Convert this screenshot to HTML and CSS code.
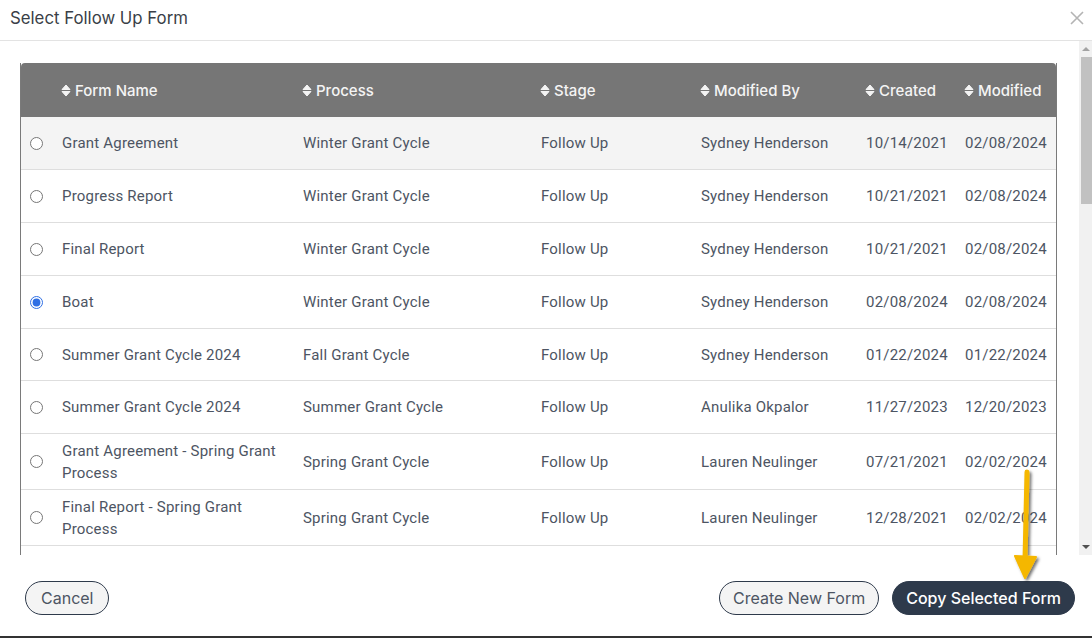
FILE: index.html
```html
<!DOCTYPE html>
<html lang="en">
<head>
    <meta charset="UTF-8">
    <meta name="viewport" content="width=device-width, initial-scale=1.0">
    <title>Select Follow Up Form</title>
    <link rel="stylesheet" href="styles.css">
</head>
<body>
    <div id="modal">
        <div id="modal-header">
            <h1>Select Follow Up Form</h1>
            <button id="close-button" aria-label="Close">
                <svg width="14" height="14" viewBox="0 0 14 14"><path d="M1 1L13 13M13 1L1 13" stroke="#b4b4b4" stroke-width="1.6" fill="none"/></svg>
            </button>
        </div>

        <div id="modal-body">
            <div id="table-wrap">
                <table id="forms-table">
                    <colgroup>
                        <col style="width:31px">
                        <col style="width:241px">
                        <col style="width:238px">
                        <col style="width:160px">
                        <col style="width:165px">
                        <col style="width:99px">
                        <col>
                    </colgroup>
                    <thead>
                        <tr>
                            <th></th>
                            <th><span class="sort"></span>Form Name</th>
                            <th><span class="sort"></span>Process</th>
                            <th><span class="sort"></span>Stage</th>
                            <th><span class="sort"></span>Modified By</th>
                            <th><span class="sort"></span>Created</th>
                            <th><span class="sort"></span>Modified</th>
                        </tr>
                    </thead>
                    <tbody>
                        <tr class="hover">
                            <td><input type="radio" name="form"></td>
                            <td>Grant Agreement</td><td>Winter Grant Cycle</td><td>Follow Up</td><td>Sydney Henderson</td><td>10/14/2021</td><td>02/08/2024</td>
                        </tr>
                        <tr>
                            <td><input type="radio" name="form"></td>
                            <td>Progress Report</td><td>Winter Grant Cycle</td><td>Follow Up</td><td>Sydney Henderson</td><td>10/21/2021</td><td>02/08/2024</td>
                        </tr>
                        <tr>
                            <td><input type="radio" name="form"></td>
                            <td>Final Report</td><td>Winter Grant Cycle</td><td>Follow Up</td><td>Sydney Henderson</td><td>10/21/2021</td><td>02/08/2024</td>
                        </tr>
                        <tr>
                            <td><input type="radio" name="form" checked></td>
                            <td>Boat</td><td>Winter Grant Cycle</td><td>Follow Up</td><td>Sydney Henderson</td><td>02/08/2024</td><td>02/08/2024</td>
                        </tr>
                        <tr class="short">
                            <td><input type="radio" name="form"></td>
                            <td>Summer Grant Cycle 2024</td><td>Fall Grant Cycle</td><td>Follow Up</td><td>Sydney Henderson</td><td>01/22/2024</td><td>01/22/2024</td>
                        </tr>
                        <tr>
                            <td><input type="radio" name="form"></td>
                            <td>Summer Grant Cycle 2024</td><td>Summer Grant Cycle</td><td>Follow Up</td><td>Anulika Okpalor</td><td>11/27/2023</td><td>12/20/2023</td>
                        </tr>
                        <tr class="wrapped">
                            <td><input type="radio" name="form"></td>
                            <td>Grant Agreement - Spring Grant Process</td><td>Spring Grant Cycle</td><td>Follow Up</td><td>Lauren Neulinger</td><td>07/21/2021</td><td>02/02/2024</td>
                        </tr>
                        <tr class="wrapped">
                            <td><input type="radio" name="form"></td>
                            <td>Final Report - Spring Grant Process</td><td>Spring Grant Cycle</td><td>Follow Up</td><td>Lauren Neulinger</td><td>12/28/2021</td><td>02/02/2024</td>
                        </tr>
                        <tr>
                            <td></td><td></td><td></td><td></td><td></td><td></td><td></td>
                        </tr>
                    </tbody>
                </table>
            </div>

            <div class="scrollbar">
                <span class="scroll-arrow up"></span>
                <div class="scroll-track">
                    <div class="scroll-thumb"></div>
                </div>
                <span class="scroll-arrow down"></span>
            </div>
        </div>

        <div id="modal-footer">
            <button class="btn btn-outline btn-cancel">Cancel</button>
            <div class="spacer"></div>
            <button class="btn btn-outline">Create New Form</button>
            <button class="btn btn-dark">Copy Selected Form</button>
        </div>

        <!-- callout arrow pointing at the copy button -->
        <svg id="callout-arrow" width="40" height="120" viewBox="0 0 40 120">
            <defs>
                <filter id="arrow-shadow" x="-50%" y="-20%" width="200%" height="140%">
                    <feDropShadow dx="2" dy="2" stdDeviation="1.5" flood-color="#000" flood-opacity="0.55"/>
                </filter>
            </defs>
            <g filter="url(#arrow-shadow)">
                <path d="M19 4 L17 92" stroke="#f5b700" stroke-width="5" stroke-linecap="round" fill="none"/>
                <path d="M7 88 L28 89 L17 110 Z" fill="#f5b700" stroke="#f5b700" stroke-width="2" stroke-linejoin="round"/>
            </g>
        </svg>
    </div>
</body>
</html>
```

FILE: styles.css
```css
* {
    box-sizing: border-box;
}

body {
    margin: 0;
    background-color: #fff;
    font-family: Roboto, "Liberation Sans", sans-serif;
}

#modal {
    position: relative;
    width: 1092px;
    height: 638px;
    display: flex;
    flex-direction: column;
    border-bottom: 2px solid #333;
}

#modal-header {
    height: 41px;
    display: flex;
    align-items: center;
    justify-content: space-between;
    padding: 0 8px 4px 10px;
    border-bottom: 1px solid #e3e3e3;
}

#modal-header h1 {
    margin: 0;
    font-family: Inter, "Open Sans", sans-serif;
    font-size: 16.8px;
    font-weight: 400;
    color: #3a3f47;
}

#close-button {
    border: none;
    background: none;
    padding: 0;
    cursor: pointer;
    display: flex;
}

#modal-body {
    height: 514px;
    display: flex;
}

#table-wrap {
    flex: 1;
    overflow: hidden;
    padding: 22px 0 0 20px;
}

.scrollbar {
    width: 13px;
    display: flex;
    flex-direction: column;
    background-color: #f1f1f1;
}

.scroll-arrow {
    height: 16px;
    display: flex;
    align-items: center;
    justify-content: center;
}

.scroll-arrow::before {
    content: "";
    border-left: 4px solid transparent;
    border-right: 4px solid transparent;
}

.scroll-arrow.up::before {
    border-bottom: 4px solid #a3a3a3;
}

.scroll-arrow.down::before {
    border-top: 4px solid #505050;
}

.scroll-track {
    flex: 1;
    padding-left: 2px;
}

.scroll-thumb {
    height: 147px;
    background-color: #c1c1c1;
}

#forms-table {
    width: 1037px;
    table-layout: fixed;
    border-collapse: separate;
    border-spacing: 0;
    border-left: 1px solid #7a7a7a;
    border-right: 1px solid #7a7a7a;
}

#forms-table th {
    height: 54px;
    background-color: #767676;
    color: #f4f4f4;
    font-family: Inter, "Open Sans", sans-serif;
    font-size: 15px;
    font-weight: 500;
    text-align: left;
    padding: 0 4px 0 9px;
    white-space: nowrap;
}

#forms-table th:first-child {
    border-top-left-radius: 4px;
}

#forms-table th:last-child {
    border-top-right-radius: 4px;
}

.sort {
    display: inline-block;
    width: 10px;
    height: 13px;
    margin-right: 4px;
    vertical-align: -1px;
    background: url("data:image/svg+xml;utf8,<svg xmlns='http://www.w3.org/2000/svg' width='10' height='13'><path d='M1 5.5L5 1L9 5.5Z M1 7.5L9 7.5L5 12Z' fill='%23f4f4f4' stroke='%23f4f4f4' stroke-width='1' stroke-linejoin='round'/></svg>") no-repeat center;
}

#forms-table td {
    height: 53px;
    padding: 6px 8px 6px 10px;
    border-bottom: 1px solid #dedede;
    font-size: 15px;
    letter-spacing: 0.2px;
    line-height: 22px;
    color: #4d5563;
    vertical-align: middle;
}

#forms-table td:first-child {
    padding: 0 0 0 9px;
}

#forms-table tr.short td {
    height: 52px;
}

#forms-table tr.wrapped td {
    padding-bottom: 5px;
}

#forms-table tr.wrapped td:first-child {
    padding-bottom: 0;
}

#forms-table tr.hover td {
    background-color: #f4f4f4;
}

input[type="radio"] {
    display: block;
    width: 13px;
    height: 13px;
    margin: 0;
    accent-color: #2f6fe4;
}

#modal-footer {
    flex: 1;
    display: flex;
    align-items: flex-start;
    gap: 13px;
    padding: 26px 17px 0 25px;
}

.spacer {
    flex: 1;
}

.btn {
    height: 34px;
    padding: 0 13px;
    border-radius: 17px;
    font-family: Inter, "Open Sans", sans-serif;
    font-size: 16px;
    cursor: pointer;
}

.btn-cancel {
    padding: 0 15px;
}

.btn-outline {
    background-color: #f4f4f4;
    border: 1px solid #2e3a4b;
    color: #4d5563;
}

.btn-dark {
    background-color: #2e3a4b;
    border: 1px solid #2e3a4b;
    color: #fff;
    font-weight: 500;
}

#callout-arrow {
    position: absolute;
    left: 1008px;
    top: 468px;
}
```
